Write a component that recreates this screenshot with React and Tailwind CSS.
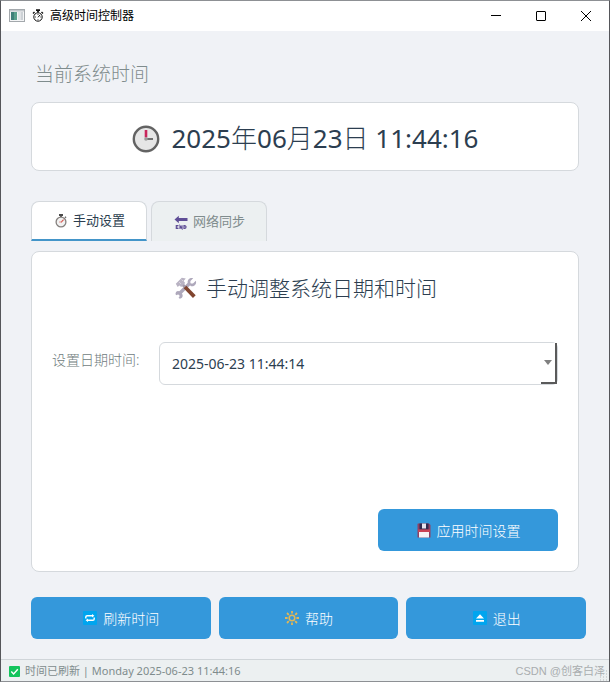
import { useState } from "react";

const TABS = [
  { id: "manual", label: "手动设置", icon: StopwatchIcon },
  { id: "network", label: "网络同步", icon: EndIcon },
];

function AppIcon() {
  return (
    <svg width="16" height="14" viewBox="0 0 16 14">
      <rect x="0.5" y="0.5" width="15" height="12" fill="#f4f5f6" stroke="#a3a8ac" />
      <rect x="1" y="1" width="14" height="1.5" fill="#c3c8cc" />
      <rect x="2" y="3" width="6" height="8" fill="#3f8079" />
      <rect x="5" y="3" width="3" height="8" fill="#5aa08c" />
      <rect x="9" y="3" width="2" height="8" fill="#dfe6e6" />
      <rect x="11.5" y="3" width="2.5" height="8" fill="#cdd2d6" />
    </svg>
  );
}

function StopwatchMono() {
  return (
    <svg width="12" height="14" viewBox="0 0 12 14" fill="none" stroke="#111">
      <circle cx="6" cy="8" r="4.2" strokeWidth="1" />
      <path d="M4 1.2h4M6 1v2.5" strokeWidth="1.8" />
      <path d="M1 4.5 2.5 3M11 4.5 9.5 3" strokeWidth="1.4" />
      <path d="M6 8.3 8 6M6 5v.8M6 10.4v.8M3 8h.8M8.4 8h.8" strokeWidth="1" />
    </svg>
  );
}

function StopwatchIcon() {
  return (
    <svg width="14" height="14" viewBox="0 0 14 14" fill="none">
      <path d="M5 1h4M7 1v2" stroke="#4a4a4a" strokeWidth="1.8" />
      <path d="m11 2.7 1 1" stroke="#666" strokeWidth="1.4" />
      <circle cx="7" cy="8" r="4.9" fill="#f1f1f1" stroke="#85807e" strokeWidth="1.3" />
      <path d="M7 8.3 9.6 5.6" stroke="#d8574f" strokeWidth="1.2" />
      <path d="M5 8h2.4" stroke="#e09a95" strokeWidth="1" />
    </svg>
  );
}

function EndIcon() {
  return (
    <svg width="14" height="15" viewBox="0 0 14 15">
      <path d="M0.5 4.5 4.8 0.8V3H13.5V6H4.8V8.2Z" fill="#5f4e96" />
      <path
        d="M4.5 10.5H2.3v3h2.2M2.3 12h2M6 14v-3.2l2 2.8v-3.3M10 10.7v2.8h.6c1.9 0 1.9-2.8 0-2.8Z"
        fill="none"
        stroke="#5f4e96"
        strokeWidth="1.2"
      />
    </svg>
  );
}

function ClockIcon() {
  return (
    <svg width="28" height="28" viewBox="0 0 28 28">
      <circle cx="14" cy="14" r="12.2" fill="#e6e6e6" stroke="#636363" strokeWidth="2.4" />
      <path d="M14 5v7.5" stroke="#c9245b" strokeWidth="2.6" />
      <path d="M14 14h7" stroke="#222" strokeWidth="1.2" />
      <circle cx="14" cy="14" r="1.8" fill="#9b9b9b" />
    </svg>
  );
}

function ToolsIcon() {
  return (
    <svg width="22" height="22" viewBox="0 0 22 22" fill="none">
      <path d="M2.5 18.5 15 6" stroke="#aea8bb" strokeWidth="3.4" />
      <path
        d="M18.2 1.2 15.4 4v2.6H18L20.8 3.8C22 7 19.5 10 16 9.2L12.8 6C12 2.5 15 0 18.2 1.2Z"
        fill="#aea8bb"
      />
      <path
        d="M.6 17.6 3 18.9l1.2 2.5c3 .5 4.6-2.7 2.6-5L5 14.7c-2.3-1.7-5 0-4.4 2.9Z"
        fill="#aea8bb"
      />
      <circle cx="3" cy="19" r="1.6" fill="#fff" />
      <path d="m7 7 4 4" stroke="#a39aa9" strokeWidth="3" />
      <path d="m10 10 9.3 9.6" stroke="#81452f" strokeWidth="3.8" />
      <path d="M.8 6.8 6.8.8l4 .6L8.6 4l1.6 2-4 4-1.8-1.6L2.7 10Z" fill="#b9b3c3" />
      <path d="m4 5 2 2M6.5 2.5 8 4" stroke="#d6d1dc" />
    </svg>
  );
}

function FloppyIcon() {
  return (
    <svg width="14" height="15" viewBox="0 0 14 15">
      <path d="M1 0.5h11L13.5 2v12.5H.5V1Z" fill="#8e4164" />
      <rect x="2.5" y="0.5" width="9" height="6" fill="#30294e" />
      <rect x="5" y="0.5" width="4" height="5" fill="#e7e3ed" />
      <rect x="2" y="8" width="10" height="6.5" fill="#f7f2f5" />
      <rect x="1" y="6.5" width="12" height="2.5" fill="#cb4254" />
    </svg>
  );
}

function RefreshIcon() {
  return (
    <svg width="14" height="14" viewBox="0 0 14 14">
      <rect width="14" height="14" rx="1" fill="#00a5ef" />
      <path
        d="M2.8 7.5V6c0-.9.5-1.3 1.3-1.3h5.4M11.2 6.5V8c0 .9-.5 1.3-1.3 1.3H4.5"
        fill="none"
        stroke="#fff"
        strokeWidth="1.4"
      />
      <path d="M9 2.9v3.6l2.4-1.8ZM5 7.5v3.6l-2.4-1.8Z" fill="#fff" />
    </svg>
  );
}

function SunIcon() {
  return (
    <svg width="14" height="14" viewBox="0 0 14 14" fill="none" stroke="#e3b755">
      <circle cx="7" cy="7" r="2.8" strokeWidth="1.5" />
      <path
        d="M7 0v2.6M7 11.4V14M0 7h2.6M11.4 7H14M2 2l1.8 1.8M10.2 10.2 12 12M12 2l-1.8 1.8M3.8 10.2 2 12"
        strokeWidth="1.8"
      />
    </svg>
  );
}

function EjectIcon() {
  return (
    <svg width="14" height="14" viewBox="0 0 14 14">
      <rect width="14" height="14" rx="1" fill="#00a5ef" />
      <path d="M7 3.2 11 7.5H3ZM3 9h8v1.8H3Z" fill="#fff" />
    </svg>
  );
}

function CheckIcon() {
  return (
    <svg width="11" height="11" viewBox="0 0 11 11">
      <rect width="11" height="11" rx="1" fill="#12c45c" />
      <path d="m2.3 5.6 2.3 2.3 4.2-4.6" fill="none" stroke="#fff" strokeWidth="1.4" />
    </svg>
  );
}

function SizeGrip() {
  return (
    <svg width="11" height="11" viewBox="0 0 11 11" className="absolute right-0 bottom-0">
      <path
        d="M8 1h2M5 4h2M8 4h2M2 7h2M5 7h2M8 7h2M2 10h2M5 10h2M8 10h2"
        stroke="#b5b9bb"
        strokeDasharray="1 2"
      />
    </svg>
  );
}

function TitleBar() {
  return (
    <header className="flex h-[30px] items-center bg-white pl-2">
      <AppIcon />
      <h1 className="ml-[7px] flex flex-1 items-center gap-[6px] text-[12px] font-normal text-black">
        <StopwatchMono />
        高级时间控制器
      </h1>
      <button aria-label="最小化" className="flex h-full w-[45px] items-center justify-center">
        <svg width="10" height="10" viewBox="0 0 10 10" stroke="#000">
          <path d="M0 4.5h10" />
        </svg>
      </button>
      <button aria-label="最大化" className="flex h-full w-[45px] items-center justify-center">
        <svg width="10" height="10" viewBox="0 0 10 10" fill="none" stroke="#000">
          <rect x="0.5" y="0.5" width="9" height="9" rx="0.5" />
        </svg>
      </button>
      <button aria-label="关闭" className="flex h-full w-[46px] items-center justify-center">
        <svg width="10" height="10" viewBox="0 0 10 10" stroke="#000">
          <path d="m0 0 10 10M10 0 0 10" />
        </svg>
      </button>
    </header>
  );
}

function ActionButton({ icon: Icon, children, className = "" }) {
  return (
    <button
      className={`flex h-[42px] items-center justify-center gap-[6px] rounded-md bg-[#3498db] pl-px text-[14px] text-white ${className}`}
    >
      <Icon />
      {children}
    </button>
  );
}

export default function App() {
  const [tab, setTab] = useState("manual");
  const [value, setValue] = useState("2025-06-23 11:44:14");

  return (
    <div className="flex min-h-screen flex-col border border-t-[#8d9094] border-r-[#55565a] border-b-[#8d9094] border-l-[#55565a] bg-[#f0f2f6] font-['Noto_Sans','Noto_Sans_CJK_SC',sans-serif] font-light">
      <TitleBar />

      <main className="flex flex-1 flex-col px-[30px] pt-[29px] pb-5">
        <h2 className="pl-1 text-[19px] leading-7 text-[#7f8c8d]">当前系统时间</h2>

        <div className="mt-[14px] flex h-[69px] items-center justify-center gap-3 rounded-lg border border-[#d5d9dd] bg-white pt-1 text-[26px] font-normal text-[#2c3e50]">
          <ClockIcon />
          <time>
            2025<span className="font-light">年</span>06<span className="font-light">月</span>23
            <span className="font-light">日</span> 11:44:16
          </time>
        </div>

        <div role="tablist" className="mt-[30px] flex gap-1">
          {TABS.map(({ id, label, icon: Icon }) => (
            <button
              key={id}
              role="tab"
              aria-selected={tab === id}
              onClick={() => setTab(id)}
              className={`flex h-10 w-[116px] items-center justify-center gap-[5px] rounded-t-lg border pt-px pl-px text-[13px] font-normal ${
                tab === id
                  ? "border-x-[#d5d9dd] border-t-[#d5d9dd] border-b-2 border-b-[#4395c9] bg-white text-[#2c3e50]"
                  : "border-[#d5d9dd] border-b-0 bg-[#ecf0f1] text-[#7f8c8d]"
              }`}
            >
              <Icon />
              {label}
            </button>
          ))}
        </div>

        <section className="mt-[10px] flex flex-1 flex-col rounded-lg border border-[#d5d9dd] bg-white p-5">
          <h3 className="flex items-center justify-center gap-[9px] pl-[2px] text-[21px] leading-8 text-[#2c3e50]">
            <ToolsIcon />
            手动调整系统日期和时间
          </h3>

          <div className="mt-[38px] flex items-center">
            <label htmlFor="datetime" className="w-[107px] pb-2 text-[14px] text-[#6f7c7d]">
              设置日期时间:
            </label>
            <div className="relative flex-1">
              <input
                id="datetime"
                type="text"
                value={value}
                onChange={(e) => setValue(e.target.value)}
                className="h-[43px] w-full rounded-md border border-[#d5d9dd] bg-white px-3 text-[14px] font-normal text-[#2c3e50] outline-none"
              />
              <button
                aria-label="选择日期"
                className="absolute top-px right-px bottom-px flex w-4 items-center justify-center border-r-2 border-b-2 border-[#5a5a5a] bg-white"
              >
                <svg width="8" height="5" viewBox="0 0 8 5">
                  <path d="M0 0h8L4 5Z" fill="#808080" />
                </svg>
              </button>
            </div>
          </div>

          <ActionButton icon={FloppyIcon} className="mt-auto w-[180px] self-end">
            应用时间设置
          </ActionButton>
        </section>

        <div className="mt-[25px] -mr-[7px] flex gap-2">
          <ActionButton icon={RefreshIcon} className="flex-1">刷新时间</ActionButton>
          <ActionButton icon={SunIcon} className="flex-1">帮助</ActionButton>
          <ActionButton icon={EjectIcon} className="flex-1">退出</ActionButton>
        </div>
      </main>

      <footer className="relative flex h-[22px] items-center gap-[5px] border-t border-[#d0d5d9] bg-[#ecf0f1] pt-px pr-1 pl-2 text-[11px] font-normal text-[#7f8c8d]">
        <CheckIcon />
        <span className="flex-1">时间已刷新 | Monday 2025-06-23 11:44:16</span>
        <span className="font-['Liberation_Sans','Noto_Sans_CJK_SC',sans-serif] text-[11px] text-[#a9adaf]">
          CSDN @创客白泽
        </span>
        <SizeGrip />
      </footer>
    </div>
  );
}
